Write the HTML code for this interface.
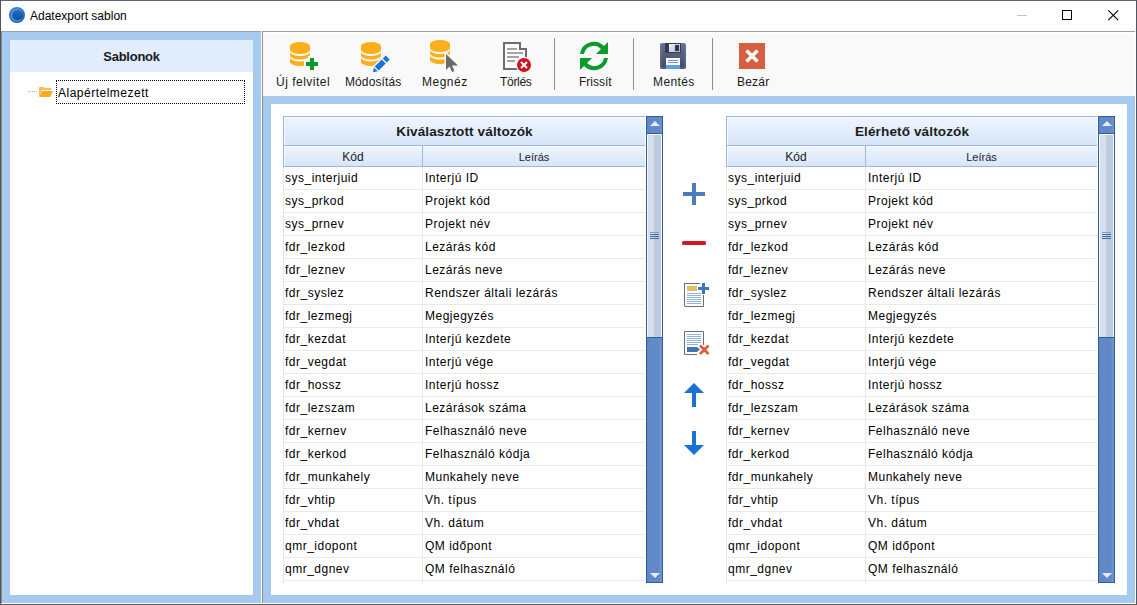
<!DOCTYPE html>
<html><head><meta charset="utf-8">
<style>
*{margin:0;padding:0;box-sizing:border-box}
html,body{width:1137px;height:605px;overflow:hidden;background:#fff}
body{position:relative;font-family:"Liberation Sans",sans-serif;color:#000}
.a{position:absolute}
.blue{background:#a6c9ef}
.t{position:absolute;white-space:pre;line-height:1}
/* grids */
.grid{position:absolute;top:116px;height:467px;overflow:hidden}
.gh1{position:absolute;left:0;top:0;height:30px;border:1px solid #9bb7dd;border-right:none;background:linear-gradient(#eff6fe,#d6e5f8);box-shadow:inset 1px 1px #f6faff}
.gh1 span{position:absolute;left:0;right:0;top:1px;text-align:center;font-weight:bold;font-size:12px;letter-spacing:0.1px;transform:scaleX(1.13);line-height:28px;color:#1c1c1c}
.gh2{position:absolute;left:0;top:29px;height:22px;border:1px solid #9bb7dd;border-right:none;background:linear-gradient(#eff6fe,#d6e5f8);box-shadow:inset 1px 1px #f6faff}
.gh2 .c2{position:absolute;top:0;bottom:0;border-left:1px solid #9bb7dd}
.gh2 span{position:absolute;top:0;text-align:center;font-size:11px;line-height:20px;color:#1c1c1c}
.rows{position:absolute;left:0;top:51px;bottom:0;border-left:1px solid #e6e6e6}
.row{position:relative;height:23px;border-bottom:1px solid #e9e9e9;font-size:12px;letter-spacing:0.5px;line-height:22px;white-space:pre;color:#000}
.row .k{position:absolute;left:1px;top:0}
.row .d{position:absolute;top:0}
.row .sep{position:absolute;top:0;bottom:-1px;border-left:1px solid #e9e9e9}
.sb{position:absolute;top:0;width:17px;height:467px;background:linear-gradient(90deg,#5a86c4 0,#6189c7 2px,#6189c7 12px,#6f98d2 14px,#6189c7 15px);border:1px solid #2f5e9c}
.sb .up{position:absolute;left:0;top:0;width:15px;height:17px;background:linear-gradient(90deg,#5a86c4 0,#6189c7 2px,#6189c7 12px,#6f98d2 14px,#6189c7 15px);border-bottom:1px solid #2f5e9c}
.sb .thumb{position:absolute;left:0;top:17px;width:15px;height:203px;border:1px solid #f4f7fb;border-bottom:none;background:linear-gradient(90deg,#d6dfea 0,#d6dfea 6px,#bccbdf 6px,#bccbdf 100%)}
.sb .thumbb{position:absolute;left:0;top:220px;width:15px;height:1px;background:#2f5e9c}
.grip{position:absolute;left:3px;width:9px;height:1px;background:#3e6aa6}
</style></head><body>

<!-- window frame -->
<div class="a" style="left:0;top:0;width:1137px;height:1px;background:#5b6470"></div>
<div class="a" style="left:0;top:0;width:1px;height:605px;background:#4d5560"></div>
<div class="a" style="left:1136px;top:0;width:1px;height:605px;background:#4d5560"></div>
<div class="a" style="left:0;top:604px;width:1137px;height:1px;background:#5a5a5a"></div>

<!-- title bar -->
<svg class="a" style="left:9px;top:7px" width="16" height="16" viewBox="0 0 16 16">
  <defs><linearGradient id="tg" x1="0" y1="0" x2="0" y2="1"><stop offset="0" stop-color="#3a7fd6"/><stop offset="1" stop-color="#1a5cb0"/></linearGradient>
  <linearGradient id="tg2" x1="0" y1="0" x2="0" y2="1"><stop offset="0" stop-color="#1d6cc0"/><stop offset="1" stop-color="#0f4f9e"/></linearGradient></defs>
  <circle cx="8" cy="8" r="8" fill="url(#tg)"/>
  <path d="M12.6,4.6 A5.8,5.8 0 1 0 12.6,11.6" fill="none" stroke="#5d97dc" stroke-width="1.3"/>
  <circle cx="9" cy="8.2" r="5" fill="url(#tg2)"/>
</svg>
<div class="t" style="left:30px;top:10px;font-size:12px;color:#000">Adatexport sablon</div>
<div class="a" style="left:1017px;top:15px;width:10px;height:1px;background:#c4c4c4"></div>
<div class="a" style="left:1062px;top:10px;width:10px;height:10px;border:1px solid #000"></div>
<svg class="a" style="left:1107px;top:9px" width="13" height="13" viewBox="0 0 13 13"><path d="M1.3 1.3L11.2 11.2M11.2 1.3L1.3 11.2" stroke="#000" stroke-width="1.1"/></svg>

<!-- left panel -->
<div class="a" style="left:1px;top:31px;width:260px;height:1px;background:#a0a0a0"></div>
<div class="a" style="left:1px;top:31px;width:1px;height:572px;background:#8a8a8a"></div>
<div class="a blue" style="left:2px;top:32px;width:259px;height:571px"></div>
<div class="a" style="left:10px;top:40px;width:243px;height:32px;background:#e1edfd"></div>
<div class="a" style="left:10px;top:72px;width:243px;height:523px;background:#fff"></div>
<div class="t" style="left:10px;width:243px;top:50px;text-align:center;font-size:13px;font-weight:bold;letter-spacing:-0.25px;color:#1a1a1a">Sablonok</div>
<!-- tree -->
<div class="a" style="left:28px;top:91px;width:10px;height:1px;background:repeating-linear-gradient(90deg,#a7b5c9 0,#a7b5c9 1px,transparent 1px,transparent 2px)"></div>
<svg class="a" style="left:39px;top:86px" width="14" height="12" viewBox="0 0 14 12">
  <path d="M0 1h5l1 1h6v2H3L0 11z" fill="#f9be50"/>
  <path d="M3 5h11l-3 6H0z" fill="#fdab1c"/>
</svg>
<div class="a" style="left:56px;top:80px;width:189px;height:24px;border:1px dotted #000"></div>
<div class="t" style="left:58px;top:87px;font-size:12px;letter-spacing:0.5px;color:#000">Alapértelmezett</div>
<div class="a" style="left:1px;top:603px;width:1135px;height:1px;background:#fff"></div>

<!-- right panel -->
<div class="a" style="left:262px;top:31px;width:873px;height:1px;background:#a0a0a0"></div>
<div class="a" style="left:262px;top:31px;width:1px;height:572px;background:#8f8f8f"></div>
<div class="a" style="left:263px;top:32px;width:872px;height:1px;background:#fff"></div>
<div class="a" style="left:263px;top:33px;width:871px;height:63px;background:#f9f9f9"></div>
<div class="a blue" style="left:263px;top:96px;width:872px;height:507px"></div>
<div class="a" style="left:271px;top:104px;width:856px;height:491px;background:#fff"></div>
<div class="a" style="left:1135px;top:31px;width:1px;height:573px;background:#fff"></div>

<!-- toolbar separators -->
<div class="a" style="left:554px;top:38px;width:1px;height:52px;background:#8e8e8e"></div>
<div class="a" style="left:633px;top:38px;width:1px;height:52px;background:#8e8e8e"></div>
<div class="a" style="left:712px;top:38px;width:1px;height:52px;background:#8e8e8e"></div>

<!-- toolbar labels -->
<div class="t" style="left:276px;top:76px;font-size:12px;letter-spacing:0.5px;color:#1a1a1a">Új felvitel</div>
<div class="t" style="left:345px;top:76px;font-size:12px;letter-spacing:0.1px;color:#1a1a1a">Módosítás</div>
<div class="t" style="left:422px;top:76px;font-size:12px;letter-spacing:0.5px;color:#1a1a1a">Megnéz</div>
<div class="t" style="left:500px;top:76px;font-size:12px;letter-spacing:-0.3px;color:#1a1a1a">Törlés</div>
<div class="t" style="left:579px;top:76px;font-size:12px;letter-spacing:0px;color:#1a1a1a">Frissít</div>
<div class="t" style="left:653px;top:76px;font-size:12px;letter-spacing:0.4px;color:#1a1a1a">Mentés</div>
<div class="t" style="left:737px;top:76px;font-size:12px;letter-spacing:0.2px;color:#1a1a1a">Bezár</div>

<!--ICONS-->
<svg class="a" style="left:0;top:0" width="1137" height="605" viewBox="0 0 1137 605">
<defs>
 
 <clipPath id="cu"><rect x="570" y="30" width="50" height="24"/></clipPath>
 <clipPath id="cd"><rect x="570" y="58" width="50" height="24"/></clipPath>
 <linearGradient id="fg" x1="0" y1="0" x2="0" y2="1"><stop offset="0" stop-color="#66718c"/><stop offset="1" stop-color="#3f4a66"/></linearGradient>
 <linearGradient id="sg" x1="0" y1="0" x2="1" y2="1"><stop offset="0" stop-color="#f4f6fa"/><stop offset="1" stop-color="#aab6cc"/></linearGradient>
</defs>
<!-- Uj felvitel -->
<g transform="translate(290,41)">
  <path d="M0,5 A10,4 0 0 1 20,5 V9 A10,4 0 0 1 0,9 Z" fill="#fdaf1b"/>
  <path d="M0,11 A10,4 0 0 0 20,11 V14.5 A10,4 0 0 1 0,14.5 Z" fill="#fdaf1b"/>
  <path d="M0,16.5 A10,4 0 0 0 20,16.5 V21 A10,4 0 0 1 0,21 Z" fill="#fdaf1b"/>
 </g>
<path d="M304,60h4v-4h8v4h4v8h-4v4h-8v-4h-4z" fill="#f9f9f9"/>
<path d="M310,62h0v0M306,62h4v-4h4v4h4v4h-4v4h-4v-4h-4z" fill="#0a9a2b"/>
<!-- Modositas -->
<g transform="translate(361,41)">
  <path d="M0,5 A10,4 0 0 1 20,5 V9 A10,4 0 0 1 0,9 Z" fill="#fdaf1b"/>
  <path d="M0,11 A10,4 0 0 0 20,11 V14.5 A10,4 0 0 1 0,14.5 Z" fill="#fdaf1b"/>
  <path d="M0,16.5 A10,4 0 0 0 20,16.5 V21 A10,4 0 0 1 0,21 Z" fill="#fdaf1b"/>
 </g>
<g transform="translate(373,72.2) rotate(-45)">
 <path d="M-1.5,-4.3 H22.3 V4.3 H-1.5 Z" fill="#f9f9f9"/>
 <path d="M0,0 L4,-2.8 V2.8 Z" fill="#1a73d9"/>
 <rect x="5.2" y="-2.8" width="10" height="5.6" fill="#1a73d9"/>
 <rect x="16.6" y="-2.8" width="4.2" height="5.6" fill="#1a73d9"/>
</g>
<!-- Megnez -->
<g transform="translate(430,39)">
  <path d="M0,5 A10,4 0 0 1 20,5 V9 A10,4 0 0 1 0,9 Z" fill="#fdaf1b"/>
  <path d="M0,11 A10,4 0 0 0 20,11 V14.5 A10,4 0 0 1 0,14.5 Z" fill="#fdaf1b"/>
  <path d="M0,16.5 A10,4 0 0 0 20,16.5 V21 A10,4 0 0 1 0,21 Z" fill="#fdaf1b"/>
 </g>
<path d="M446,54 L446,70 L449.5,66.5 L452,72 L454.5,71 L452,65.5 L458,65.5 Z" fill="#6b6b6b" stroke="#f9f9f9" stroke-width="3" stroke-linejoin="round" paint-order="stroke"/>
<!-- Torles -->
<path d="M504,69 V43 H520 V49 H526 V69 Z" fill="#fff" stroke="#6d6d6d" stroke-width="2"/>
<rect x="507" y="48" width="10" height="2" fill="#a3a3a3"/>
<rect x="507" y="52" width="16" height="2" fill="#a3a3a3"/>
<rect x="507" y="56" width="12" height="2" fill="#a3a3a3"/>
<rect x="507" y="60" width="8" height="2" fill="#a3a3a3"/>
<circle cx="524" cy="65" r="8.2" fill="#f9f9f9"/>
<circle cx="524" cy="65" r="7" fill="#d0121b"/>
<path d="M521,62 L527,68 M527,62 L521,68" stroke="#fff" stroke-width="2"/>
<!-- Frissit -->
<g fill="#0a9b2b">
 <path d="M580,54 A14,14 0 0 1 603.9,46.1 L608,42 V54 H596 L601,49 A10,10 0 0 0 584,54 Z"/>
 <path d="M608,58 A14,14 0 0 1 584.1,65.9 L580,70 V58 H592 L587,63 A10,10 0 0 0 604,58 Z"/>
</g>
<!-- Mentes -->
<rect x="660" y="43" width="26" height="26" rx="2" fill="url(#fg)"/>
<rect x="661" y="44" width="24" height="24" rx="1.5" fill="none" stroke="#7d879e" stroke-width="1" opacity="0.6"/>
<rect x="665" y="43" width="16" height="10" fill="#333d55"/>
<rect x="669" y="44" width="11" height="8" fill="url(#sg)"/>
<rect x="675" y="45" width="4" height="6" fill="#2c3650"/>
<rect x="666" y="58" width="14" height="7" fill="#fbfbfd"/>
<rect x="666" y="65" width="14" height="4" fill="#5d9fe0"/>
<rect x="668" y="60" width="10" height="1" fill="#7a8cc0"/>
<rect x="668" y="62" width="10" height="1" fill="#7a8cc0"/>
<!-- Bezar -->
<rect x="739" y="43" width="26" height="26" fill="#d65f3f"/>
<path d="M746.5,50.5 L757.5,61.5 M757.5,50.5 L746.5,61.5" stroke="#fafafa" stroke-width="3.6"/>

<!-- middle icons -->
<rect x="683" y="192" width="22" height="4" fill="#4a7ebb"/>
<rect x="692" y="183" width="4" height="22" fill="#4a7ebb"/>
<rect x="682" y="241" width="24" height="4" rx="1.5" fill="#d5161c"/>
<!-- add doc -->
<path d="M684.5,306 V283.5 H700 M684.5,306.5 H703.5 V295" fill="none" stroke="#6d6d6d" stroke-width="1"/>
<rect x="685" y="284" width="18" height="22" fill="#fff" opacity="0"/>
<rect x="687" y="286" width="10" height="5" fill="#e9bc69"/>
<g fill="#8fb3dc"><rect x="687" y="293" width="14" height="1"/><rect x="687" y="295" width="14" height="1"/><rect x="687" y="297" width="14" height="1"/><rect x="687" y="299" width="14" height="1"/><rect x="687" y="301" width="14" height="1"/><rect x="687" y="303" width="14" height="1"/></g>
<rect x="702" y="283" width="3" height="11" fill="#3f74b6"/>
<rect x="698" y="287" width="11" height="3" fill="#3f74b6"/>
<!-- del doc -->
<path d="M697,354.5 H684.5 V331.5 H703.5 V345" fill="none" stroke="#6d6d6d" stroke-width="1"/>
<g fill="#8fb3dc"><rect x="687" y="334" width="14" height="1"/><rect x="687" y="336" width="14" height="1"/><rect x="687" y="338" width="14" height="1"/><rect x="687" y="340" width="14" height="1"/><rect x="687" y="342" width="14" height="1"/><rect x="687" y="344" width="11" height="1"/></g>
<path d="M687,347 H697 L700,349.5 L697,352 H687 Z" fill="#3f74b6"/>
<path d="M700,345.5 L708.5,354 M708.5,345.5 L700,354" stroke="#e05b3b" stroke-width="2.8"/>
<!-- arrows -->
<path d="M684,393 L694,383 L704,393 Z" fill="#1a72d8"/>
<rect x="692" y="393" width="4" height="14" fill="#1a72d8"/>
<rect x="692" y="431" width="4" height="14" fill="#1a72d8"/>
<path d="M684,445 L704,445 L694,455 Z" fill="#1a72d8"/>
</svg>

<!--GRIDS-->
<div class="grid" style="left:283px;width:380px">
 <div class="gh1" style="width:362px"><span>Kiválasztott változók</span></div>
 <div class="gh2" style="width:362px"><div class="c2" style="left:138px"></div><span style="left:0;width:138px;font-size:12px;top:1px">Kód</span><span style="left:139px;width:222px;top:1px">Leírás</span></div>
 <div class="rows" style="width:362px">
  <div class="row"><span class="k">sys_interjuid</span><span class="sep" style="left:138px"></span><span class="d" style="left:141px">Interjú ID</span></div>
  <div class="row"><span class="k">sys_prkod</span><span class="sep" style="left:138px"></span><span class="d" style="left:141px">Projekt kód</span></div>
  <div class="row"><span class="k">sys_prnev</span><span class="sep" style="left:138px"></span><span class="d" style="left:141px">Projekt név</span></div>
  <div class="row"><span class="k">fdr_lezkod</span><span class="sep" style="left:138px"></span><span class="d" style="left:141px">Lezárás kód</span></div>
  <div class="row"><span class="k">fdr_leznev</span><span class="sep" style="left:138px"></span><span class="d" style="left:141px">Lezárás neve</span></div>
  <div class="row"><span class="k">fdr_syslez</span><span class="sep" style="left:138px"></span><span class="d" style="left:141px">Rendszer általi lezárás</span></div>
  <div class="row"><span class="k">fdr_lezmegj</span><span class="sep" style="left:138px"></span><span class="d" style="left:141px">Megjegyzés</span></div>
  <div class="row"><span class="k">fdr_kezdat</span><span class="sep" style="left:138px"></span><span class="d" style="left:141px">Interjú kezdete</span></div>
  <div class="row"><span class="k">fdr_vegdat</span><span class="sep" style="left:138px"></span><span class="d" style="left:141px">Interjú vége</span></div>
  <div class="row"><span class="k">fdr_hossz</span><span class="sep" style="left:138px"></span><span class="d" style="left:141px">Interjú hossz</span></div>
  <div class="row"><span class="k">fdr_lezszam</span><span class="sep" style="left:138px"></span><span class="d" style="left:141px">Lezárások száma</span></div>
  <div class="row"><span class="k">fdr_kernev</span><span class="sep" style="left:138px"></span><span class="d" style="left:141px">Felhasználó neve</span></div>
  <div class="row"><span class="k">fdr_kerkod</span><span class="sep" style="left:138px"></span><span class="d" style="left:141px">Felhasználó kódja</span></div>
  <div class="row"><span class="k">fdr_munkahely</span><span class="sep" style="left:138px"></span><span class="d" style="left:141px">Munkahely neve</span></div>
  <div class="row"><span class="k">fdr_vhtip</span><span class="sep" style="left:138px"></span><span class="d" style="left:141px">Vh. típus</span></div>
  <div class="row"><span class="k">fdr_vhdat</span><span class="sep" style="left:138px"></span><span class="d" style="left:141px">Vh. dátum</span></div>
  <div class="row"><span class="k">qmr_idopont</span><span class="sep" style="left:138px"></span><span class="d" style="left:141px">QM időpont</span></div>
  <div class="row"><span class="k">qmr_dgnev</span><span class="sep" style="left:138px"></span><span class="d" style="left:141px">QM felhasználó</span></div>
  <div class="row"><span class="k"></span><span class="sep" style="left:138px"></span><span class="d" style="left:141px"></span></div>
 </div>
 <div class="sb" style="left:363px"><div class="up"></div><div class="thumb"></div><div class="thumbb"></div>
  <svg style="position:absolute;left:3px;top:4px" width="10" height="6"><path d="M5 0L10 5H0z" fill="#e3ebf6"/></svg>
  <div class="grip" style="top:115px;background:#7d9cc6"></div><div class="grip" style="top:117px"></div><div class="grip" style="top:119px"></div><div class="grip" style="top:121px"></div>
  <svg style="position:absolute;left:3px;top:456px" width="10" height="6"><path d="M0 0H10L5 5z" fill="#e3ebf6"/></svg>
 </div>
</div>
<div class="grid" style="left:726px;width:389px">
 <div class="gh1" style="width:371px"><span>Elérhető változók</span></div>
 <div class="gh2" style="width:371px"><div class="c2" style="left:138px"></div><span style="left:0;width:138px;font-size:12px;top:1px">Kód</span><span style="left:139px;width:231px;top:1px">Leírás</span></div>
 <div class="rows" style="width:371px">
  <div class="row"><span class="k">sys_interjuid</span><span class="sep" style="left:138px"></span><span class="d" style="left:141px">Interjú ID</span></div>
  <div class="row"><span class="k">sys_prkod</span><span class="sep" style="left:138px"></span><span class="d" style="left:141px">Projekt kód</span></div>
  <div class="row"><span class="k">sys_prnev</span><span class="sep" style="left:138px"></span><span class="d" style="left:141px">Projekt név</span></div>
  <div class="row"><span class="k">fdr_lezkod</span><span class="sep" style="left:138px"></span><span class="d" style="left:141px">Lezárás kód</span></div>
  <div class="row"><span class="k">fdr_leznev</span><span class="sep" style="left:138px"></span><span class="d" style="left:141px">Lezárás neve</span></div>
  <div class="row"><span class="k">fdr_syslez</span><span class="sep" style="left:138px"></span><span class="d" style="left:141px">Rendszer általi lezárás</span></div>
  <div class="row"><span class="k">fdr_lezmegj</span><span class="sep" style="left:138px"></span><span class="d" style="left:141px">Megjegyzés</span></div>
  <div class="row"><span class="k">fdr_kezdat</span><span class="sep" style="left:138px"></span><span class="d" style="left:141px">Interjú kezdete</span></div>
  <div class="row"><span class="k">fdr_vegdat</span><span class="sep" style="left:138px"></span><span class="d" style="left:141px">Interjú vége</span></div>
  <div class="row"><span class="k">fdr_hossz</span><span class="sep" style="left:138px"></span><span class="d" style="left:141px">Interjú hossz</span></div>
  <div class="row"><span class="k">fdr_lezszam</span><span class="sep" style="left:138px"></span><span class="d" style="left:141px">Lezárások száma</span></div>
  <div class="row"><span class="k">fdr_kernev</span><span class="sep" style="left:138px"></span><span class="d" style="left:141px">Felhasználó neve</span></div>
  <div class="row"><span class="k">fdr_kerkod</span><span class="sep" style="left:138px"></span><span class="d" style="left:141px">Felhasználó kódja</span></div>
  <div class="row"><span class="k">fdr_munkahely</span><span class="sep" style="left:138px"></span><span class="d" style="left:141px">Munkahely neve</span></div>
  <div class="row"><span class="k">fdr_vhtip</span><span class="sep" style="left:138px"></span><span class="d" style="left:141px">Vh. típus</span></div>
  <div class="row"><span class="k">fdr_vhdat</span><span class="sep" style="left:138px"></span><span class="d" style="left:141px">Vh. dátum</span></div>
  <div class="row"><span class="k">qmr_idopont</span><span class="sep" style="left:138px"></span><span class="d" style="left:141px">QM időpont</span></div>
  <div class="row"><span class="k">qmr_dgnev</span><span class="sep" style="left:138px"></span><span class="d" style="left:141px">QM felhasználó</span></div>
  <div class="row"><span class="k"></span><span class="sep" style="left:138px"></span><span class="d" style="left:141px"></span></div>
 </div>
 <div class="sb" style="left:372px"><div class="up"></div><div class="thumb"></div><div class="thumbb"></div>
  <svg style="position:absolute;left:3px;top:4px" width="10" height="6"><path d="M5 0L10 5H0z" fill="#e3ebf6"/></svg>
  <div class="grip" style="top:115px;background:#7d9cc6"></div><div class="grip" style="top:117px"></div><div class="grip" style="top:119px"></div><div class="grip" style="top:121px"></div>
  <svg style="position:absolute;left:3px;top:456px" width="10" height="6"><path d="M0 0H10L5 5z" fill="#e3ebf6"/></svg>
 </div>
</div>
<!--/GRIDS-->
</body></html>
